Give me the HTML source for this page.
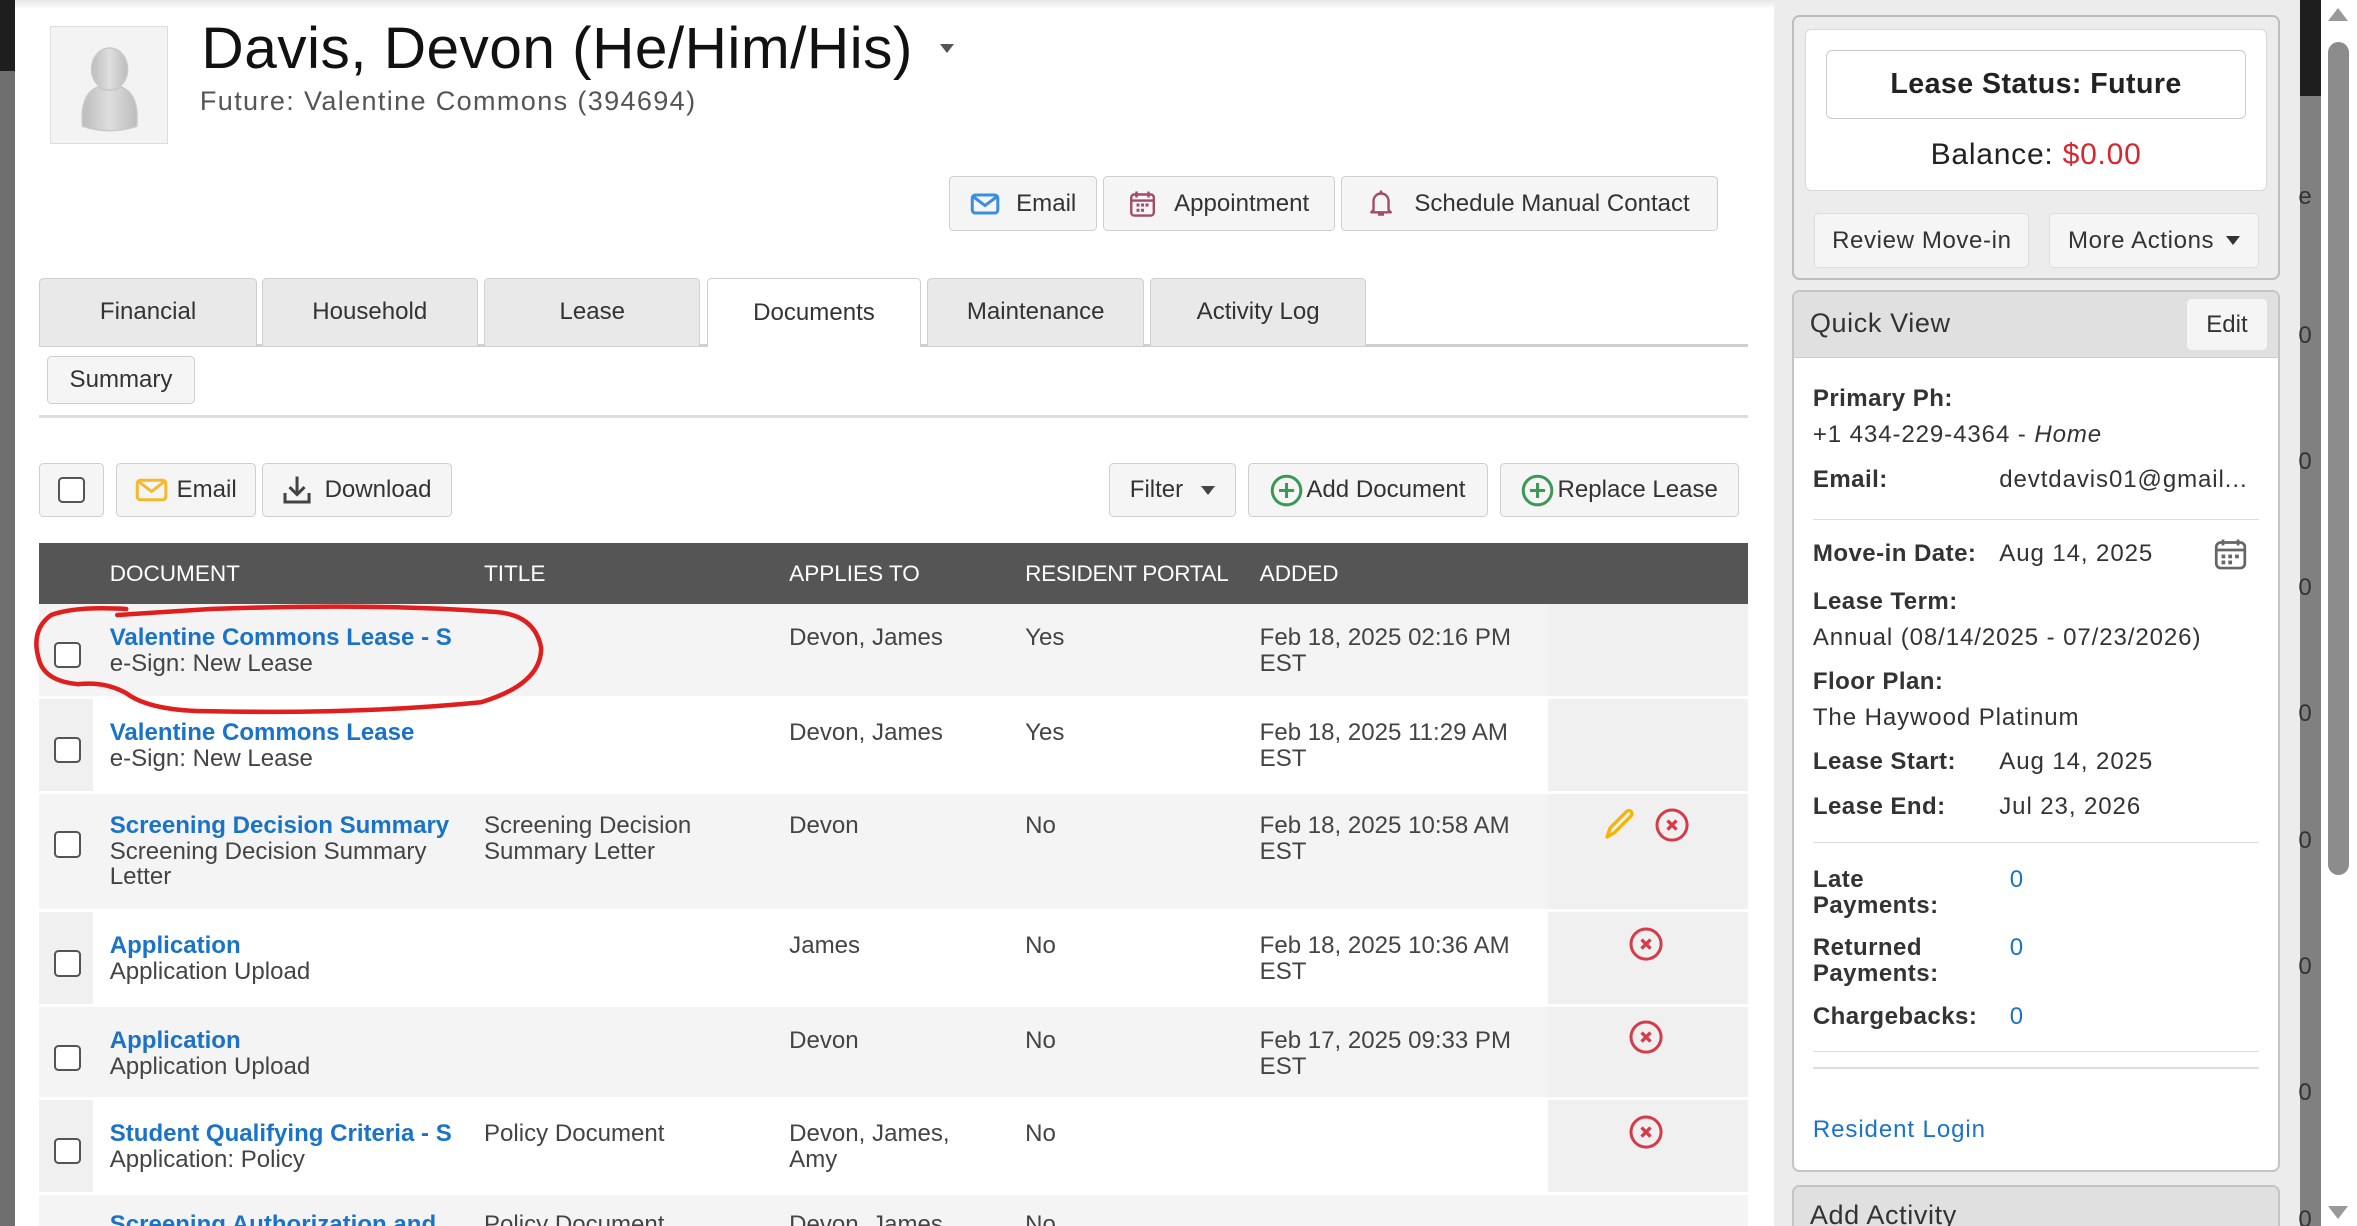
<!DOCTYPE html>
<html><head><meta charset="utf-8">
<style>
html,body{margin:0;padding:0;width:2357px;height:1226px;overflow:hidden;background:#fff}
#w{zoom:1.5032;width:1568px;height:816px;position:relative;overflow:hidden;font-family:"Liberation Sans",Arial,sans-serif;color:#333;background:#fff}
.a{position:absolute}
.btn{position:absolute;background:#f5f5f5;border:1px solid #cfcfcf;border-radius:3px;box-sizing:border-box;font-size:16px;color:#333;display:flex;align-items:center;justify-content:center;white-space:nowrap}
.tab{position:absolute;top:185px;height:45px;background:#e9e9e9;border:1px solid #cfcfcf;border-bottom:none;border-radius:3px 3px 0 0;box-sizing:border-box;font-size:16px;color:#333;display:flex;align-items:center;justify-content:center}
.row{position:absolute;left:26px;width:1137px}
.cell{position:absolute;font-size:16px;line-height:17px;color:#444}
.lnk{color:#1a73c8;font-weight:bold}
.cb{position:absolute;left:10px;width:15px;height:15px;border:1.5px solid #555;border-radius:3px;background:#fff}
.lbl{position:absolute;left:1206px;font-size:16px;font-weight:bold;color:#333;line-height:17px;letter-spacing:.3px}
.val{position:absolute;font-size:16px;color:#333;line-height:17px;letter-spacing:.6px}
.z{position:absolute;left:1529px;font-size:16px;color:#333}
</style></head><body><div id="w">
<div class="a" style="left:0;top:0;width:10px;height:47px;background:#1e1e1e"></div>
<div class="a" style="left:0;top:47px;width:10px;height:769px;background:#6f6f6f"></div>
<div class="a" style="left:10px;top:0;width:1520px;height:6px;background:linear-gradient(#e6e6e6,#fff)"></div>
<div class="a" style="left:1180px;top:0;width:350px;height:816px;background:#ececec"></div>
<div class="a" style="left:1530px;top:0;width:14px;height:64px;background:#1e1e1e"></div>
<div class="a" style="left:1530px;top:64px;width:14px;height:752px;background:#808080"></div>
<div class="z" style="top:122px">e</div>
<div class="z" style="top:214px">0</div><div class="z" style="top:298px">0</div><div class="z" style="top:382px">0</div><div class="z" style="top:466px">0</div><div class="z" style="top:550px">0</div><div class="z" style="top:634px">0</div><div class="z" style="top:718px">0</div><div class="z" style="top:802px">0</div>
<div class="a" style="left:1544px;top:0;width:24px;height:816px;background:#fff"></div>
<div class="a" style="left:1549px;top:28px;width:14px;height:554px;background:#8c8c8c;border-radius:7px"></div>
<div class="a" style="left:1549px;top:5px;width:0;height:0;border-left:7px solid transparent;border-right:7px solid transparent;border-bottom:9px solid #999"></div>
<div class="a" style="left:1549px;top:802px;width:0;height:0;border-left:7px solid transparent;border-right:7px solid transparent;border-top:9px solid #999"></div>

<div class="a" style="left:33px;top:17px;width:79px;height:79px;background:#f3f3f3;border:1px solid #ddd;box-sizing:border-box">
<svg width="78" height="78" viewBox="0 0 78 78"><defs><linearGradient id="g" x1="0" y1="0" x2="1" y2="0"><stop offset="0" stop-color="#bcbcbc"/><stop offset=".5" stop-color="#dedede"/><stop offset="1" stop-color="#bcbcbc"/></linearGradient></defs>
<ellipse cx="39" cy="28" rx="12" ry="14" fill="url(#g)" stroke="#c8c8c8"/><path d="M21 66 Q19 45 31 40 Q39 44 47 40 Q59 45 57 66 Q39 72 21 66Z" fill="url(#g)" stroke="#c8c8c8"/></svg></div>
<div class="a" style="left:134px;top:10px;font-size:39px;color:#111;white-space:nowrap;letter-spacing:.3px">Davis, Devon (He/Him/His)</div>
<div class="a" style="left:625px;top:29px;border-left:5px solid transparent;border-right:5px solid transparent;border-top:6px solid #555"></div>
<div class="a" style="left:133px;top:57px;font-size:18px;color:#555;letter-spacing:.9px">Future: Valentine Commons (394694)</div>

<div class="btn" style="left:631px;top:117px;width:99px;height:37px"><svg width="20" height="16" style="margin-right:11px"><rect x="1.5" y="2" width="17" height="12" rx="2" fill="none" stroke="#3b8ede" stroke-width="2"/><path d="M2 3l8 6 8-6" fill="none" stroke="#3b8ede" stroke-width="2"/></svg>Email</div>
<div class="btn" style="left:734px;top:117px;width:154px;height:37px"><svg width="18" height="18" style="margin-right:12px"><rect x="1.5" y="3" width="15" height="14" rx="2" fill="none" stroke="#a24b6a" stroke-width="1.6"/><path d="M5 1v4M13 1v4M2 7h14" stroke="#a24b6a" stroke-width="1.6"/><g fill="#a24b6a"><rect x="5" y="9" width="2" height="2"/><rect x="8" y="9" width="2" height="2"/><rect x="11" y="9" width="2" height="2"/><rect x="5" y="12.5" width="2" height="2"/><rect x="8" y="12.5" width="2" height="2"/></g></svg>Appointment</div>
<div class="btn" style="left:892px;top:117px;width:251px;height:37px"><svg width="16" height="19" style="margin-right:14px"><path d="M3 14V8a5 5 0 0 1 10 0v6l1.5 1.5h-13z" fill="none" stroke="#a24b6a" stroke-width="1.6" stroke-linejoin="round"/><path d="M8 1v2M6 17h4" stroke="#a24b6a" stroke-width="1.6"/></svg>Schedule Manual Contact</div>

<div class="a" style="left:26px;top:229px;width:1137px;height:2px;background:#cfcfcf"></div>
<div class="tab" style="left:26px;width:145px">Financial</div>
<div class="tab" style="left:174px;width:144px">Household</div>
<div class="tab" style="left:322px;width:144px">Lease</div>
<div class="tab" style="left:470px;width:143px;background:#fff;height:46px">Documents</div>
<div class="tab" style="left:617px;width:144px">Maintenance</div>
<div class="tab" style="left:765px;width:144px">Activity Log</div>
<div class="btn" style="left:31px;top:237px;width:99px;height:32px">Summary</div>
<div class="a" style="left:26px;top:276px;width:1137px;height:2px;background:#ddd"></div>

<div class="btn" style="left:26px;top:308px;width:43px;height:36px"><div style="width:15px;height:15px;border:1.5px solid #555;border-radius:3px;background:#fff"></div></div>
<div class="btn" style="left:77px;top:308px;width:93px;height:36px"><svg width="22" height="16" style="margin-right:6px"><rect x="1.5" y="1.5" width="19" height="13" rx="2" fill="none" stroke="#f5b82e" stroke-width="2"/><path d="M2 2l9 7 9-7" fill="none" stroke="#f5b82e" stroke-width="2"/></svg>Email</div>
<div class="btn" style="left:174px;top:308px;width:127px;height:36px"><svg width="20" height="20" style="margin-right:8px"><path d="M10 1v12M5 8l5 5 5-5" fill="none" stroke="#444" stroke-width="2"/><path d="M2 12v6h16v-6" fill="none" stroke="#444" stroke-width="2"/></svg>Download</div>
<div class="btn" style="left:738px;top:308px;width:84px;height:36px">Filter<span style="display:inline-block;margin-left:12px;border-left:5px solid transparent;border-right:5px solid transparent;border-top:6px solid #444"></span></div>
<div class="btn" style="left:830px;top:308px;width:160px;height:36px"><svg width="22" height="22" style="margin-right:2px"><circle cx="11" cy="11" r="9.5" fill="none" stroke="#3a9a55" stroke-width="2"/><path d="M11 6v10M6 11h10" stroke="#3a9a55" stroke-width="2"/></svg>Add Document</div>
<div class="btn" style="left:998px;top:308px;width:159px;height:36px"><svg width="22" height="22" style="margin-right:2px"><circle cx="11" cy="11" r="9.5" fill="none" stroke="#3a9a55" stroke-width="2"/><path d="M11 6v10M6 11h10" stroke="#3a9a55" stroke-width="2"/></svg>Replace Lease</div>

<div class="a" style="left:26px;top:361px;width:1137px;height:41px;background:#555"></div>
<div class="a" style="top:373px;left:73px;color:#fff;font-size:15px">DOCUMENT</div>
<div class="a" style="top:373px;left:322px;color:#fff;font-size:15px">TITLE</div>
<div class="a" style="top:373px;left:525px;color:#fff;font-size:15px">APPLIES TO</div>
<div class="a" style="top:373px;left:682px;color:#fff;font-size:15px;letter-spacing:-.2px">RESIDENT PORTAL</div>
<div class="a" style="top:373px;left:838px;color:#fff;font-size:15px">ADDED</div>

<div class="row" style="top:402px;height:61px;background:#f4f4f4"><div class="a" style="left:1004px;width:133px;height:100%;background:#f0f0f0"></div><div class="cb" style="top:25px"></div></div>
<div class="row" style="top:465px;height:61px;background:#f0f0f0"><div class="a" style="left:36px;width:968px;height:100%;background:#fff"></div><div class="cb" style="top:25px"></div></div>
<div class="row" style="top:528px;height:77px;background:#f4f4f4"><div class="a" style="left:1004px;width:133px;height:100%;background:#f0f0f0"></div><div class="cb" style="top:25px"></div></div>
<div class="row" style="top:607px;height:61px;background:#f0f0f0"><div class="a" style="left:36px;width:968px;height:100%;background:#fff"></div><div class="cb" style="top:25px"></div></div>
<div class="row" style="top:670px;height:60px;background:#f4f4f4"><div class="a" style="left:1004px;width:133px;height:100%;background:#f0f0f0"></div><div class="cb" style="top:25px"></div></div>
<div class="row" style="top:732px;height:61px;background:#f0f0f0"><div class="a" style="left:36px;width:968px;height:100%;background:#fff"></div><div class="cb" style="top:25px"></div></div>
<div class="row" style="top:795px;height:30px;background:#f4f4f4"><div class="cb" style="top:25px"></div></div>

<div class="cell" style="left:73px;top:416px;width:228px;overflow:hidden;white-space:nowrap"><span class="lnk">Valentine Commons Lease - Signed</span><br>e-Sign: New Lease</div>
<div class="cell" style="left:525px;top:416px">Devon, James</div><div class="cell" style="left:682px;top:416px">Yes</div><div class="cell" style="left:838px;top:416px">Feb 18, 2025 02:16 PM<br>EST</div>

<div class="cell" style="left:73px;top:479px"><span class="lnk">Valentine Commons Lease</span><br>e-Sign: New Lease</div>
<div class="cell" style="left:525px;top:479px">Devon, James</div><div class="cell" style="left:682px;top:479px">Yes</div><div class="cell" style="left:838px;top:479px">Feb 18, 2025 11:29 AM<br>EST</div>

<div class="cell" style="left:73px;top:541px"><span class="lnk">Screening Decision Summary</span><br>Screening Decision Summary<br>Letter</div>
<div class="cell" style="left:322px;top:541px">Screening Decision<br>Summary Letter</div>
<div class="cell" style="left:525px;top:541px">Devon</div><div class="cell" style="left:682px;top:541px">No</div><div class="cell" style="left:838px;top:541px">Feb 18, 2025 10:58 AM<br>EST</div>

<div class="cell" style="left:73px;top:621px"><span class="lnk">Application</span><br>Application Upload</div>
<div class="cell" style="left:525px;top:621px">James</div><div class="cell" style="left:682px;top:621px">No</div><div class="cell" style="left:838px;top:621px">Feb 18, 2025 10:36 AM<br>EST</div>

<div class="cell" style="left:73px;top:684px"><span class="lnk">Application</span><br>Application Upload</div>
<div class="cell" style="left:525px;top:684px">Devon</div><div class="cell" style="left:682px;top:684px">No</div><div class="cell" style="left:838px;top:684px">Feb 17, 2025 09:33 PM<br>EST</div>

<div class="cell" style="left:73px;top:746px;width:228px;overflow:hidden;white-space:nowrap"><span class="lnk">Student Qualifying Criteria - Signed</span><br>Application: Policy</div>
<div class="cell" style="left:322px;top:746px">Policy Document</div>
<div class="cell" style="left:525px;top:746px">Devon, James,<br>Amy</div><div class="cell" style="left:682px;top:746px">No</div>

<div class="cell" style="left:73px;top:806px;width:228px;overflow:hidden;white-space:nowrap"><span class="lnk">Screening Authorization and</span></div>
<div class="cell" style="left:322px;top:806px">Policy Document</div>
<div class="cell" style="left:525px;top:806px">Devon, James</div><div class="cell" style="left:682px;top:806px">No</div>

<svg class="a" style="left:1065px;top:537px" width="24" height="24"><path d="M4 20l2-6L17 3a2 2 0 0 1 3 3L9 17z" fill="none" stroke="#f5b400" stroke-width="2.2" stroke-linejoin="round"/></svg>
<svg class="a" style="left:1100px;top:537px" width="24" height="24"><circle cx="12" cy="12" r="10" fill="none" stroke="#d63b4a" stroke-width="2"/><path d="M9 9l6 6M15 9l-6 6" stroke="#d63b4a" stroke-width="2.2"/></svg>
<svg class="a" style="left:1083px;top:616px" width="24" height="24"><circle cx="12" cy="12" r="10" fill="none" stroke="#d63b4a" stroke-width="2"/><path d="M9 9l6 6M15 9l-6 6" stroke="#d63b4a" stroke-width="2.2"/></svg>
<svg class="a" style="left:1083px;top:678px" width="24" height="24"><circle cx="12" cy="12" r="10" fill="none" stroke="#d63b4a" stroke-width="2"/><path d="M9 9l6 6M15 9l-6 6" stroke="#d63b4a" stroke-width="2.2"/></svg>
<svg class="a" style="left:1083px;top:741px" width="24" height="24"><circle cx="12" cy="12" r="10" fill="none" stroke="#d63b4a" stroke-width="2"/><path d="M9 9l6 6M15 9l-6 6" stroke="#d63b4a" stroke-width="2.2"/></svg>

<svg class="a" style="left:0;top:395px" width="400" height="90"><path d="M84 10 Q50 8 34 14 Q20 24 26 44 Q30 58 52 60 Q70 58 84 66 Q100 78 140 78 Q240 80 320 72 Q360 60 360 36 Q356 14 330 12 Q250 6 140 10 L78 14" fill="none" stroke="#e01e1e" stroke-width="3" stroke-linecap="round"/></svg>

<div class="a" style="left:1192px;top:10px;width:325px;height:176px;border:1.5px solid #bdbdbd;border-radius:5px;box-sizing:border-box;background:#ececec"></div>
<div class="a" style="left:1201px;top:19px;width:307px;height:108px;border:1px solid #d8d8d8;border-radius:4px;box-sizing:border-box;background:#fff"></div>
<div class="a" style="left:1215px;top:33px;width:279px;height:46px;border:1px solid #ccc;border-radius:4px;box-sizing:border-box;display:flex;align-items:center;justify-content:center;font-weight:bold;font-size:19px;color:#222;letter-spacing:.3px">Lease Status: Future</div>
<div class="a" style="left:1201px;top:92px;width:307px;text-align:center;font-size:20px;color:#222;letter-spacing:.5px">Balance: <span style="color:#d9262f">$0.00</span></div>
<div class="btn" style="left:1207px;top:142px;width:143px;height:36px;border-color:#ddd;letter-spacing:.4px">Review Move-in</div>
<div class="btn" style="left:1363px;top:142px;width:140px;height:36px;border-color:#ddd;letter-spacing:.4px">More Actions<span style="display:inline-block;margin-left:8px;border-left:5px solid transparent;border-right:5px solid transparent;border-top:6px solid #333"></span></div>

<div class="a" style="left:1192px;top:193px;width:325px;height:587px;border:1.5px solid #c4c4c4;border-radius:5px;box-sizing:border-box;background:#fff;overflow:hidden"><div style="height:43px;background:#e0e0e0;border-bottom:1px solid #ccc"></div></div>
<div class="a" style="left:1204px;top:205px;font-size:18px;color:#333;letter-spacing:.4px">Quick View</div>
<div class="a" style="left:1455px;top:199px;width:53px;height:34px;background:#f5f5f5;border-radius:3px;display:flex;align-items:center;justify-content:center;font-size:16px;color:#333">Edit</div>

<div class="lbl" style="top:257px">Primary Ph:</div>
<div class="val" style="left:1206px;top:281px">+1 434-229-4364 - <i>Home</i></div>
<div class="lbl" style="top:311px">Email:</div>
<div class="val" style="left:1330px;top:311px">devtdavis01@gmail...</div>
<div class="a" style="left:1206px;top:345px;width:297px;height:1px;background:#ddd"></div>
<div class="lbl" style="top:360px">Move-in Date:</div>
<div class="val" style="left:1330px;top:360px">Aug 14, 2025</div>
<svg class="a" style="left:1473px;top:358px" width="22" height="22"><rect x="1.5" y="3" width="19" height="17" rx="3" fill="none" stroke="#666" stroke-width="1.8"/><path d="M6 1v4M16 1v4M2 8h18" stroke="#666" stroke-width="1.8"/><g fill="#666"><rect x="5" y="11" width="2.5" height="2.5"/><rect x="9.5" y="11" width="2.5" height="2.5"/><rect x="14" y="11" width="2.5" height="2.5"/><rect x="5" y="15" width="2.5" height="2.5"/><rect x="9.5" y="15" width="2.5" height="2.5"/></g></svg>
<div class="lbl" style="top:392px">Lease Term:</div>
<div class="val" style="left:1206px;top:416px">Annual (08/14/2025 - 07/23/2026)</div>
<div class="lbl" style="top:445px">Floor Plan:</div>
<div class="val" style="left:1206px;top:469px">The Haywood Platinum</div>
<div class="lbl" style="top:498px">Lease Start:</div>
<div class="val" style="left:1330px;top:498px">Aug 14, 2025</div>
<div class="lbl" style="top:528px">Lease End:</div>
<div class="val" style="left:1330px;top:528px">Jul 23, 2026</div>
<div class="a" style="left:1206px;top:560px;width:297px;height:1px;background:#ddd"></div>
<div class="lbl" style="top:577px;line-height:17px">Late<br>Payments:</div>
<div class="val" style="left:1337px;top:577px;color:#1a73c8">0</div>
<div class="lbl" style="top:622px;line-height:17px">Returned<br>Payments:</div>
<div class="val" style="left:1337px;top:622px;color:#1a73c8">0</div>
<div class="lbl" style="top:668px">Chargebacks:</div>
<div class="val" style="left:1337px;top:668px;color:#1a73c8">0</div>
<div class="a" style="left:1206px;top:699px;width:297px;height:1px;background:#ddd"></div>
<div class="a" style="left:1206px;top:710px;width:297px;height:1px;background:#ddd"></div>
<div class="val" style="left:1206px;top:743px;color:#1a73c8">Resident Login</div>

<div class="a" style="left:1192px;top:788px;width:325px;height:40px;border:1.5px solid #c4c4c4;border-radius:5px;box-sizing:border-box;background:#e0e0e0"></div>
<div class="a" style="left:1204px;top:798px;font-size:18px;color:#333;letter-spacing:.4px">Add Activity</div>
</div></body></html>
